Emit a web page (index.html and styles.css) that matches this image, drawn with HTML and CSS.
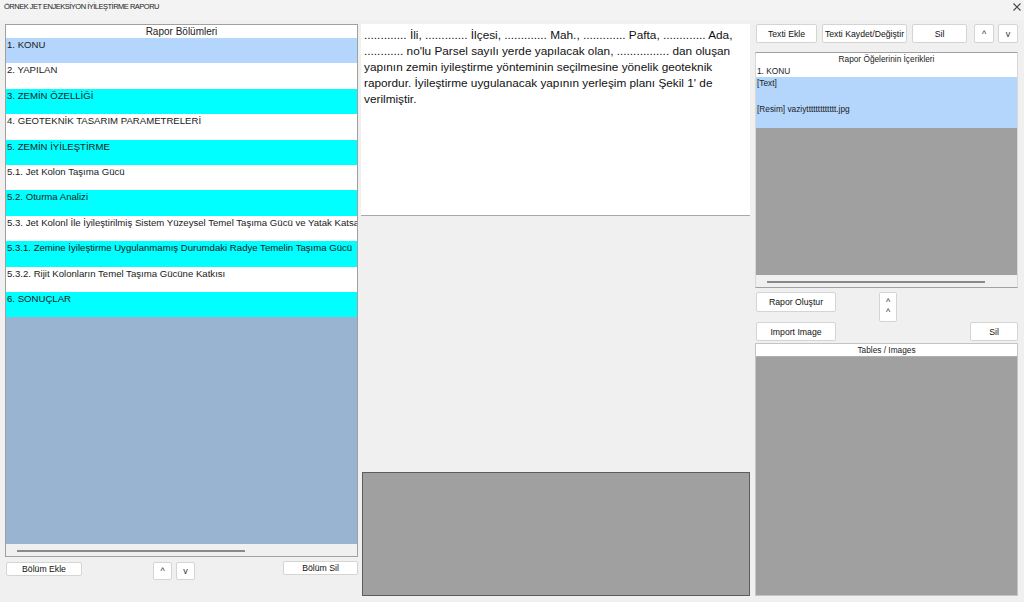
FILE: index.html
```html
<!DOCTYPE html>
<html lang="tr">
<head>
    <meta charset="UTF-8">
    <title>ÖRNEK JET ENJEKSİYON İYİLEŞTİRME RAPORU</title>
    <link rel="stylesheet" href="styles.css">
</head>
<body>

    <div class="titlebar">
        <span class="title">ÖRNEK JET ENJEKSİYON İYİLEŞTİRME RAPORU</span>
        <svg class="close" width="8" height="8" viewBox="0 0 8 8">
            <path d="M0.5 0.5 L7.5 7.5 M7.5 0.5 L0.5 7.5" stroke="#444" stroke-width="1.1" fill="none"/>
        </svg>
    </div>

    <div class="main">
        <!-- Rapor bölümleri listesi -->
        <div class="col-left">
            <div class="sections">
                <div class="list-head">Rapor Bölümleri</div>
                <div class="item selected">1. KONU</div>
                <div class="item">2. YAPILAN</div>
                <div class="item alt">3. ZEMİN ÖZELLİĞİ</div>
                <div class="item">4. GEOTEKNİK TASARIM PARAMETRELERİ</div>
                <div class="item alt">5. ZEMİN İYİLEŞTİRME</div>
                <div class="item">5.1. Jet Kolon Taşıma Gücü</div>
                <div class="item alt">5.2. Oturma Analizi</div>
                <div class="item">5.3. Jet Kolonl İle İyileştirilmiş Sistem Yüzeysel Temel Taşıma Gücü ve Yatak Katsa</div>
                <div class="item alt">5.3.1. Zemine İyileştirme Uygulanmamış Durumdaki Radye Temelin Taşıma Gücü</div>
                <div class="item">5.3.2. Rijit Kolonların Temel Taşıma Gücüne Katkısı</div>
                <div class="item alt">6. SONUÇLAR</div>
                <div class="filler"></div>
                <div class="hscroll"><span class="thumb"></span></div>
            </div>
            <div class="left-buttons">
                <button class="btn btn-add">Bölüm Ekle</button>
                <button class="btn arrow arrow-up">^</button>
                <button class="btn arrow arrow-down">v</button>
                <button class="btn btn-remove">Bölüm Sil</button>
            </div>
        </div>

        <!-- Seçili bölümün metni ve resim önizleme -->
        <div class="col-center">
            <div class="doc-text">............. İli, ............. İlçesi, ............. Mah., ............. Pafta, ............. Ada, ............ no'lu Parsel sayılı yerde yapılacak olan, ................ dan oluşan yapının zemin iyileştirme yönteminin seçilmesine yönelik geoteknik rapordur. İyileştirme uygulanacak yapının yerleşim planı Şekil 1' de verilmiştir.</div>
            <div class="preview"></div>
        </div>

        <!-- Bölüm içerikleri -->
        <div class="col-right">
            <div class="top-buttons">
                <button class="btn b-add">Texti Ekle</button>
                <button class="btn b-save">Texti Kaydet/Değiştir</button>
                <button class="btn b-del">Sil</button>
                <button class="btn b-up">^</button>
                <button class="btn b-down">v</button>
            </div>

            <div class="contents">
                <div class="small-head">Rapor Öğelerinin İçerikleri</div>
                <div class="small-row">1. KONU</div>
                <div class="small-block">[Text]<br><br>[Resim] vaziyttttttttttttt.jpg<br>&nbsp;</div>
                <div class="gray-fill"></div>
                <div class="hscroll hscroll-r"><span class="thumb"></span></div>
            </div>

            <div class="actions">
                <button class="btn a-report">Rapor Oluştur</button>
                <button class="btn a-move"><span>^</span><span>^</span></button>
                <button class="btn a-import">Import Image</button>
                <button class="btn a-del">Sil</button>
            </div>

            <div class="tables">
                <div class="small-head tables-head">Tables / Images</div>
            </div>
        </div>
    </div>

</body>
</html>
```

FILE: styles.css
```css
body {
    margin: 0;
    width: 1024px;
    height: 602px;
    overflow: hidden;
    background-color: #f0f0f0;
    font-family: "Liberation Sans", Arial, sans-serif;
    color: #000;
}

.titlebar {
    height: 20px;
    display: flex;
    justify-content: space-between;
    align-items: flex-start;
    padding: 0 3px 0 4px;
    background-color: #f3f3f3;
}
.title {
    font-size: 7.5px;
    line-height: 8px;
    padding-top: 3px;
    letter-spacing: -0.5px;
    color: #222;
}
.close {
    margin-top: 3px;
}

.main {
    display: flex;
    height: 572px;
    padding: 4px 6px 0 5px;
}

/* Sol sütun */
.col-left {
    width: 353px;
    display: flex;
    flex-direction: column;
}
.sections {
    height: 533px;
    box-sizing: border-box;
    border: 1px solid #a0a0a0;
    background-color: #fff;
    display: flex;
    flex-direction: column;
    overflow: hidden;
}
.list-head {
    height: 13px;
    line-height: 13px;
    flex: none;
    text-align: center;
    font-size: 10px;
    color: #222;
}
.item {
    height: 25.4px;
    flex: none;
    box-sizing: border-box;
    padding: 1px 0 0 1px;
    font-size: 9.6px;
    line-height: 12px;
    white-space: nowrap;
    overflow: hidden;
    color: #1a1a1a;
}
.selected {
    background-color: #b4d6fc;
}
.alt {
    background-color: #00ffff;
}
.filler {
    flex: 1;
    background-color: #99b4d1;
}
.hscroll {
    height: 12px;
    flex: none;
    box-sizing: border-box;
    padding: 6px 0 0 11px;
    background-color: #f0f0f0;
}
.thumb {
    display: block;
    width: 228px;
    height: 2px;
    background-color: #8a8a8a;
}

.left-buttons {
    display: flex;
    align-items: flex-start;
    margin-top: 4px;
    padding-left: 1px;
}

.btn {
    background-color: #fff;
    border: 1px solid #d4d4d4;
    border-radius: 2px;
    padding: 0;
    box-sizing: border-box;
    font-family: "Liberation Sans", Arial, sans-serif;
    font-size: 8.7px;
    color: #111;
}
.btn-add {
    width: 76px;
    height: 14px;
    margin-top: 1px;
}
.arrow {
    width: 19px;
    height: 18px;
    margin-top: 1px;
    font-size: 9px;
    color: #333;
}
.arrow-up {
    margin-left: 71px;
}
.arrow-down {
    margin-left: 4px;
}
.btn-remove {
    width: 75px;
    height: 14px;
    margin-left: auto;
}

/* Orta sütun */
.col-center {
    width: 389px;
    margin-left: 3px;
    display: flex;
    flex-direction: column;
    justify-content: space-between;
}
.doc-text {
    height: 192px;
    box-sizing: border-box;
    padding: 3px 4px 0 3px;
    background-color: #fff;
    border-bottom: 1px solid #aaa;
    font-size: 11.8px;
    line-height: 16px;
    color: #111;
}
.preview {
    height: 124px;
    margin-left: 1px;
    box-sizing: border-box;
    background-color: #a0a0a0;
    border: 1px solid #5c5c5c;
}

/* Sağ sütun */
.col-right {
    width: 263px;
    margin-left: 5px;
    display: flex;
    flex-direction: column;
}
.top-buttons {
    display: flex;
    height: 19px;
    padding-left: 1px;
}
.top-buttons .btn {
    height: 19px;
}
.b-add { width: 61px; }
.b-save { width: 85px; margin-left: 5px; }
.b-del { width: 55px; margin-left: 5px; }
.top-buttons .b-up { width: 20px; margin-left: 7px; font-size: 9px; color: #333; }
.top-buttons .b-down { width: 20px; margin-left: 4px; font-size: 9px; color: #333; }

.contents {
    margin-top: 9px;
    height: 236px;
    box-sizing: border-box;
    border: 1px solid #a0a0a0;
    border-left-color: #d8d8d8;
    border-right-color: #d8d8d8;
    background-color: #a0a0a0;
    display: flex;
    flex-direction: column;
}
.small-head {
    height: 12px;
    line-height: 12px;
    flex: none;
    text-align: center;
    background-color: #fff;
    font-size: 8.3px;
    color: #222;
}
.small-row {
    height: 12px;
    line-height: 12px;
    flex: none;
    padding-left: 1px;
    background-color: #fff;
    font-size: 8.3px;
    color: #222;
}
.small-block {
    flex: none;
    padding-left: 1px;
    background-color: #b4d6fc;
    font-size: 8.3px;
    line-height: 12.75px;
    color: #222;
}
.gray-fill {
    flex: 1;
}
.hscroll-r {
    padding-left: 11px;
}
.hscroll-r .thumb {
    width: 218px;
}

.actions {
    display: grid;
    grid-template-columns: 80px 43px 18px 1fr 48px;
    grid-template-rows: 30px 19px;
    margin-top: 4px;
    padding-left: 1px;
}
.a-report {
    grid-column: 1;
    grid-row: 1;
    height: 20px;
}
.a-move {
    grid-column: 3;
    grid-row: 1;
    height: 30px;
    display: flex;
    flex-direction: column;
    align-items: center;
    justify-content: center;
    font-size: 9px;
    line-height: 10px;
    color: #333;
}
.a-import {
    grid-column: 1;
    grid-row: 2;
    height: 19px;
}
.a-del {
    grid-column: 5;
    grid-row: 2;
    height: 19px;
}

.tables {
    margin-top: 2px;
    flex: 1;
    box-sizing: border-box;
    border: 1px solid #c4c4c4;
    background-color: #a0a0a0;
}
.tables-head {
    border-bottom: 1px solid #b0b0b0;
}
```
